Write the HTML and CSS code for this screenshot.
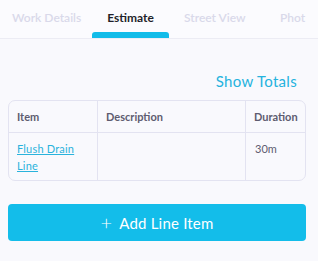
FILE: index.html
```html
<!DOCTYPE html>
<html>
<head>
<meta charset="utf-8">
<link rel="stylesheet" href="styles.css">
</head>
<body>
<div class="tabs">
  <div class="tab tab-work">Work Details</div>
  <div class="tab tab-active">Estimate</div>
  <div class="tab tab-street">Street View</div>
  <div class="tab tab-phot">Phot</div>
</div>
<div class="content">
  <div class="totals-row"><span class="show-totals">Show Totals</span></div>
  <div class="table">
    <div class="row head">
      <div class="cell c1">Item</div>
      <div class="cell c2">Description</div>
      <div class="cell c3">Duration</div>
    </div>
    <div class="row body">
      <div class="cell c1"><a class="link">Flush Drain Line</a></div>
      <div class="cell c2"></div>
      <div class="cell c3">30m</div>
    </div>
  </div>
  <div class="add-btn"><span class="plus">+</span><span>Add Line Item</span></div>
</div>
</body>
</html>
```
FILE: styles.css
```css
html, body {
  margin: 0;
  padding: 0;
  background: #f9f9fd;
  font-family: "Lato", "Noto Sans", sans-serif;
}
.tabs {
  height: 38px;
  border-bottom: 1px solid #ececf4;
  display: flex;
  position: relative;
  background: #fbfbfe;
  overflow: hidden;
}
.tab {
  font-size: 12px;
  font-weight: 600;
  color: #d9d9ea;
  padding-top: 10px;
  white-space: nowrap;
  box-sizing: border-box;
  height: 38px;
}
.tab-work { margin-left: 12px; width: 80px; }
.tab-active {
  width: 77px;
  text-align: center;
  color: #1f1f2a;
  font-weight: 700;
  position: relative;
}
.tab-active::after {
  content: "";
  position: absolute;
  left: 0;
  right: 0;
  bottom: 0;
  height: 6px;
  background: #12bce9;
  border-radius: 3px 3px 0 0;
}
.tab-street { margin-left: 15px; width: 80px; }
.tab-phot { margin-left: 16px; }
.content {
  padding: 0 12px 0 8px;
}
.totals-row {
  display: flex;
  justify-content: flex-end;
  padding-top: 31px;
  padding-right: 9px;
  height: 22px;
}
.show-totals {
  font-size: 15px;
  color: #25b3dd;
  letter-spacing: 0.3px;
  line-height: 22px;
}
.table {
  margin-top: 8px;
  border: 1px solid #e3e3f1;
  border-radius: 7px;
  background: #f9f9fd;
  overflow: hidden;
}
.row {
  display: flex;
}
.head {
  height: 31px;
  border-bottom: 1px solid #e3e3f1;
}
.body {
  height: 47px;
}
.cell {
  box-sizing: border-box;
  padding-left: 8px;
  font-size: 11px;
  color: #5e5c70;
}
.head .cell {
  font-weight: 700;
  line-height: 31px;
}
.c1 { width: 89px; border-right: 1px solid #e3e3f1; }
.c2 { width: 148px; border-right: 1px solid #e3e3f1; }
.c3 { flex: 1; }
.body .cell {
  padding-top: 7px;
  line-height: 17px;
}
.body .c1 { padding-right: 10px; }
.body .c3 { padding-left: 9px; }
.link {
  color: #2ab3dc;
  text-decoration: underline;
  font-size: 11px;
  letter-spacing: 0.2px;
}
.add-btn {
  margin-top: 23px;
  height: 37px;
  background: #13bdea;
  border-radius: 4px;
  color: #ffffff;
  display: flex;
  align-items: center;
  justify-content: center;
  font-size: 15px;
  gap: 7px;
  letter-spacing: 0.2px;
}
.plus {
  font-size: 20px;
  font-weight: 300;
  line-height: 20px;
  margin-top: -2px;
}
```
